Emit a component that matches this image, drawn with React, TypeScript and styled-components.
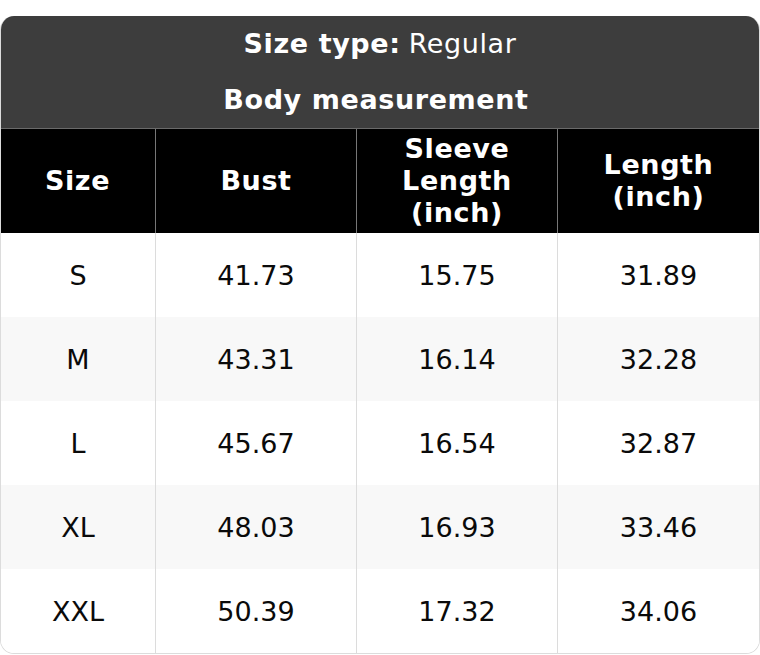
import React from 'react';
import styled, { createGlobalStyle } from 'styled-components';

const GlobalStyle = createGlobalStyle`
  html, body {
    margin: 0;
    padding: 0;
    background: #fff;
  }
  body {
    font-family: 'DejaVu Sans', 'Liberation Sans', sans-serif;
  }
`;

const Page = styled.div`
  padding-top: 16px;
`;

const Card = styled.div`
  border: 1px solid #dcdcdc;
  border-top: none;
  border-radius: 14px;
  overflow: hidden;
  background: #fff;
`;

const Title = styled.div`
  background: #3d3d3d;
  color: #fff;
  font-size: 27px;
  letter-spacing: 0.6px;
  border-bottom: 1px solid #6a6a6a;
  margin: 0 -1px;
`;

const TitleLine = styled.div<{ $height: number }>`
  height: ${(p) => p.$height}px;
  display: flex;
  align-items: center;
  justify-content: center;
  & > b {
    font-weight: bold;
    margin-right: 0.3em;
  }
`;

const Grid = styled.div`
  display: grid;
  grid-template-columns: 154px 201px 201px 202px;
`;

const HeadCell = styled.div`
  background: #000;
  color: #fff;
  height: 104px;
  font-size: 27px;
  font-weight: bold;
  letter-spacing: 0.6px;
  line-height: 32px;
  display: flex;
  align-items: center;
  justify-content: center;
  text-align: center;
  &:not(:first-child) {
    border-left: 1px solid #777;
  }
  &:first-child {
    margin-left: -1px;
  }
  &:last-child {
    margin-right: -1px;
  }
`;

const Cell = styled.div<{ $alt: boolean }>`
  height: 84px;
  display: flex;
  align-items: center;
  justify-content: center;
  font-size: 27px;
  color: #0a0a0a;
  background: ${(p) => (p.$alt ? '#f8f8f8' : '#fff')};
  &:not(:nth-child(4n + 1)) {
    border-left: 1px solid #dcdcdc;
  }
`;

const headers = ['Size', 'Bust', 'Sleeve\nLength\n(inch)', 'Length\n(inch)'];

const rows = [
  ['S', '41.73', '15.75', '31.89'],
  ['M', '43.31', '16.14', '32.28'],
  ['L', '45.67', '16.54', '32.87'],
  ['XL', '48.03', '16.93', '33.46'],
  ['XXL', '50.39', '17.32', '34.06'],
];

const App: React.FC = () => (
  <Page>
    <GlobalStyle />
    <Card>
      <Title>
        <TitleLine $height={54}>
          <b>Size type:</b> Regular
        </TitleLine>
        <TitleLine $height={58}>
          <b>Body measurement</b>
        </TitleLine>
      </Title>
      <Grid>
        {headers.map((h) => (
          <HeadCell key={h}>
            <span>
              {h.split('\n').map((line, i) => (
                <React.Fragment key={line}>
                  {i > 0 && <br />}
                  {line}
                </React.Fragment>
              ))}
            </span>
          </HeadCell>
        ))}
        {rows.map((row, r) =>
          row.map((value, c) => (
            <Cell key={`${r}-${c}`} $alt={r % 2 === 1}>
              {value}
            </Cell>
          ))
        )}
      </Grid>
    </Card>
  </Page>
);

export default App;
